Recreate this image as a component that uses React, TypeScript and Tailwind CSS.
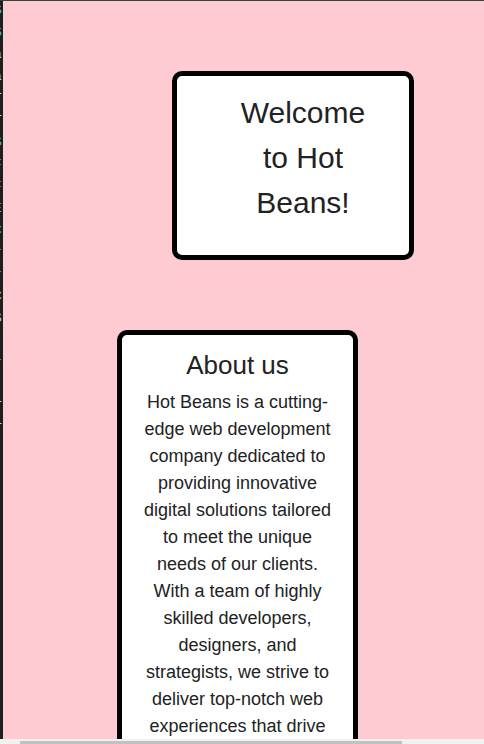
import React from 'react';

// clipped edge of an editor window on the left
const editorLines: { text: string; color: string }[] = [
  { text: 'S', color: 'text-[#4fc1ff]' },
  { text: 'S', color: 'text-[#4fc1ff]' },
  { text: 'a', color: 'text-[#9cdcfe]' },
  { text: 'a', color: 'text-[#9cdcfe]' },
  { text: 'T', color: 'text-[#d4d4d4]' },
  { text: 'T', color: 'text-[#d4d4d4]' },
  { text: 'S', color: 'text-[#4ec9b0]' },
  { text: 'F', color: 'text-[#569cd6]' },
  { text: 'F', color: 'text-[#f44747]' },
  { text: 'E', color: 'text-[#4ec9b0]' },
  { text: 'C', color: 'text-[#4ec9b0]' },
  { text: 'r', color: 'text-[#ce9178]' },
  { text: 'r', color: 'text-[#ce9178]' },
  { text: 'C', color: 'text-[#d4d4d4]' },
  { text: 'S', color: 'text-[#9cdcfe]' },
  { text: '', color: '' },
  { text: 'r', color: 'text-[#ce9178]' },
  { text: '', color: '' },
  { text: 'T', color: 'text-[#dcdcaa]' },
  { text: 'T', color: 'text-[#d4d4d4]' },
];

const App: React.FC = () => {
  return (
    <div className="relative h-[744px] w-[484px] overflow-hidden border-t border-[#3c3f41] font-['Liberation_Sans',Arial,sans-serif] text-[#222]">
      <div className="flex h-full">
        {/* Editor edge */}
        <div className="w-[3px] shrink-0 overflow-hidden bg-[#1e1e1e]">
          <div className="-ml-[6px] -mt-[1px] font-['Liberation_Mono',monospace] text-[13px] leading-[22px]">
            {editorLines.map((line, i) => (
              <div key={i} className={line.color}>
                {line.text || '\u00a0'}
              </div>
            ))}
          </div>
        </div>

        {/* Page */}
        <div className="flex-1 bg-[#ffcbd2]">
          <div className="ml-[169px] mt-[70px] h-[189px] w-[242px] rounded-[10px] border-[5px] border-black bg-white pl-[56px] pr-[36px] pt-[14px]">
            <h1 className="text-center text-[30px] font-normal leading-[45px]">Welcome to Hot Beans!</h1>
          </div>

          <div className="ml-[114px] mt-[70px] w-[241px] rounded-[10px] border-[5px] border-black bg-white px-[15px] pt-[11px] pb-6 text-center">
            <h2 className="text-[26px] font-normal leading-[39px]">About us</h2>
            <p className="mt-[4px] text-[18px] leading-[27px]">
              Hot Beans is a cutting-edge web development company dedicated to providing innovative digital
              solutions tailored to meet the unique needs of our clients. With a team of highly skilled developers,
              designers, and strategists, we strive to deliver top-notch web experiences that drive business growth
              and success.
            </p>
          </div>
        </div>
      </div>

      {/* Horizontal scrollbar */}
      <div className="absolute bottom-0 left-0 right-0 h-[5px] bg-[#f1f1f1]">
        <div className="ml-[20px] mt-[2px] h-[3px] w-[382px] bg-[#c1c1c1]" />
      </div>
    </div>
  );
};

export default App;
